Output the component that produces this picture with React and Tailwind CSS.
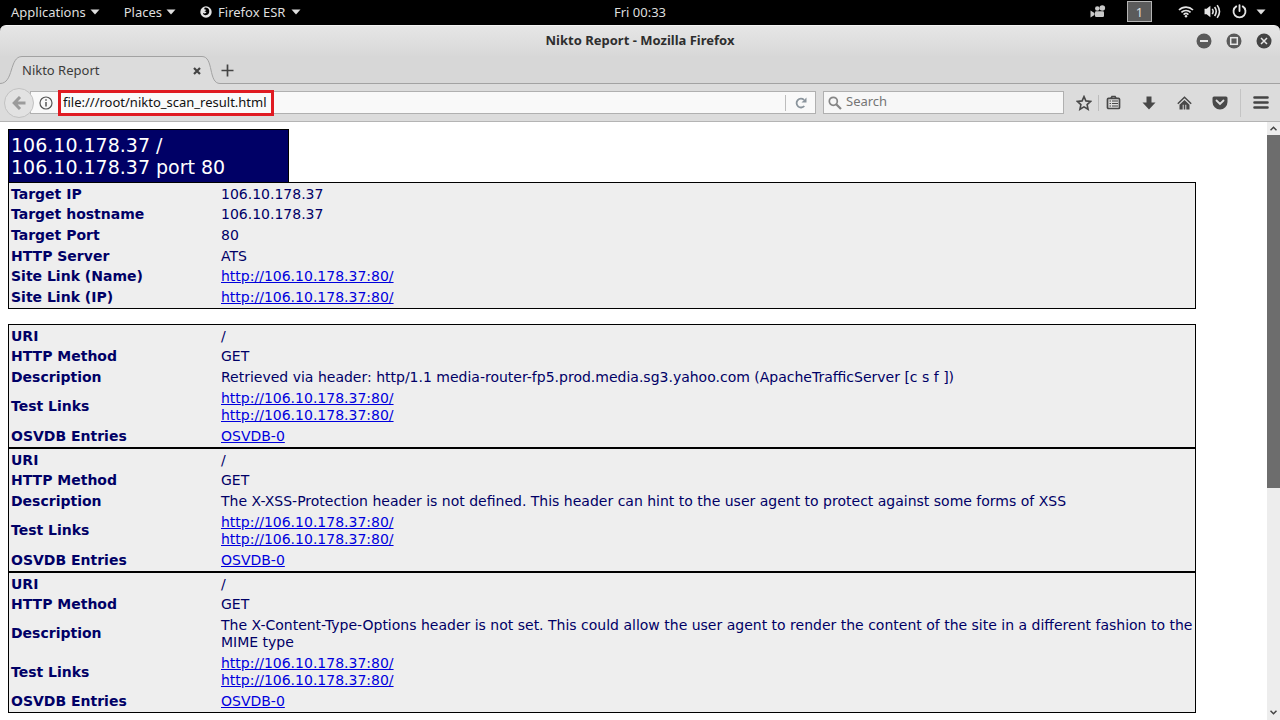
import React from "react";

const siteLink = "http://106.10.178.37:80/";

const summary = [
  ["Target IP", "106.10.178.37"],
  ["Target hostname", "106.10.178.37"],
  ["Target Port", "80"],
  ["HTTP Server", "ATS"],
  ["Site Link (Name)", siteLink, true],
  ["Site Link (IP)", siteLink, true],
];

const findings = [
  {
    text: "Retrieved via header: http/1.1 media-router-fp5.prod.media.sg3.yahoo.com (ApacheTrafficServer [c s f ])",
    height: "h-[124px]",
  },
  {
    text: "The X-XSS-Protection header is not defined. This header can hint to the user agent to protect against some forms of XSS",
    height: "h-[124px]",
  },
  {
    text: "The X-Content-Type-Options header is not set. This could allow the user agent to render the content of the site in a different fashion to the MIME type",
    height: "h-[141px]",
  },
];

function Caret() {
  return (
    <svg width="10" height="6" viewBox="0 0 10 6" fill="currentColor" aria-hidden="true">
      <path d="M0.5 0.5h9L5 5.5z" />
    </svg>
  );
}

function TopBar() {
  return (
    <header className="grid h-[25px] shrink-0 grid-cols-[1fr_auto_1fr] items-center bg-black pb-[2px] text-[13px] leading-5 text-[#dedede]">
      <nav className="flex items-center gap-6 pl-[11px]">
        <button className="flex items-center gap-1">Applications <Caret /></button>
        <button className="flex items-center gap-1">Places <Caret /></button>
        <button className="flex items-center gap-[6px]">
          <svg width="12" height="12" viewBox="0 0 12 12" aria-hidden="true">
            <circle cx="6" cy="6" r="5.7" fill="#e4e4e4" />
            <path d="M4.800 1.500C7 1.200 9 2.500 9.200 4.600 9.600 7.500 7.800 9.400 5.600 9.300 3.800 9.200 2.900 8 3 6.800c.8.700 2 .8 2.900.1.700-.5.600-1 0-1.200H4.600C5 4.800 5.600 4.600 6.200 4.300 5.800 3.400 5 3.200 4 3.200z" fill="#000" />
          </svg>
          Firefox ESR <Caret />
        </button>
      </nav>
      <time>Fri 00:33</time>
      <div className="flex items-center justify-end pr-[14px]">
        <button aria-label="Screen recorder" className="mr-[21px]">
          <svg width="16" height="13" viewBox="0 0 16 13" fill="#c9c9c9" aria-hidden="true">
            <circle cx="7.300" cy="3.500" r="2.300" /><circle cx="12.300" cy="3" r="2.800" />
            <rect x="5" y="6.300" width="9" height="5.700" rx="1.200" />
            <path d="M0.500 5.500L4.500 8v2L0.500 12.500z" />
          </svg>
        </button>
        <button aria-label="Workspace 1" className="mr-[26px] h-[21px] w-[25px] border border-[#b4b4b4] bg-[#5b5b5b] leading-[18px]">1</button>
        <button aria-label="Wireless network" className="mr-[10px]">
          <svg width="16" height="13" viewBox="0 0 16 13" fill="none" stroke="#e4e4e4" strokeWidth="1.700" aria-hidden="true">
            <path d="M1 5a10 10 0 0 1 14 0M3.400 7.400a6.500 6.500 0 0 1 9.200 0M5.600 9.600a3.500 3.500 0 0 1 4.800 0" />
            <circle cx="8" cy="11.200" r="1.200" fill="#e4e4e4" stroke="none" />
          </svg>
        </button>
        <button aria-label="Volume" className="mr-[11px]">
          <svg width="17" height="15" viewBox="0 0 16 14" fill="none" stroke="#e4e4e4" strokeWidth="1.500" aria-hidden="true">
            <path d="M0.500 4.500h2L6 1.500v11L2.500 9.500h-2z" fill="#e4e4e4" stroke="none" />
            <path d="M7.800 4.500q1.600 2.500 0 5M10 2.800q3 4.200 0 8.400M12.400 1q4.400 6 0 12" />
          </svg>
        </button>
        <button aria-label="Power" className="mr-[9px]">
          <svg width="15" height="15" viewBox="0 0 14 14" fill="none" stroke="#e4e4e4" strokeWidth="1.700" strokeLinecap="round" aria-hidden="true">
            <path d="M4 2.200a5.600 5.600 0 1 0 6 0M7 1v5.500" />
          </svg>
        </button>
        <button aria-label="System menu"><Caret /></button>
      </div>
    </header>
  );
}

function WindowButton({ label, tone, children }) {
  return (
    <button aria-label={label}>
      <svg width="16" height="16" viewBox="0 0 16 16" fill="none" stroke="#e6e6e6" strokeWidth="1.500" aria-hidden="true">
        <circle cx="8" cy="8" r="7.500" fill={tone} stroke="none" />
        {children}
      </svg>
    </button>
  );
}

function TitleBar() {
  return (
    <div className="grid h-[31px] shrink-0 grid-cols-[1fr_auto_1fr] items-center rounded-t-md border-t border-[#f4f4f4] bg-linear-to-b from-[#e6e6e6] to-[#d8d8d8] pb-px">
      <h1 className="col-start-2 text-[13px] font-bold text-[#2e2e2e]">Nikto Report - Mozilla Firefox</h1>
      <div className="flex items-center justify-end gap-[14px] pr-2">
        <WindowButton label="Minimize" tone="#5a5a5a"><path d="M4 8h8" strokeWidth="2" /></WindowButton>
        <WindowButton label="Maximize" tone="#5a5a5a"><rect x="4.700" y="4.700" width="6.600" height="6.600" /></WindowButton>
        <WindowButton label="Close" tone="#444"><path d="M5 5l6 6M11 5l-6 6" /></WindowButton>
      </div>
    </div>
  );
}

function TabStrip() {
  return (
    <div className="flex h-7 shrink-0 bg-[#d7d7d7]">
      <svg width="22" height="28" viewBox="0 0 22 28" aria-hidden="true">
        <path d="M0 27.500C14 27.500 9 0.500 22 0.500V28H0z" fill="#dcdcdc" />
        <path d="M0 27.500C14 27.500 9 0.500 22 0.500" fill="none" stroke="#a2a2a2" />
      </svg>
      <div className="flex w-[180px] items-center justify-between border-t border-[#a2a2a2] bg-[#dcdcdc] text-[13px] text-[#3b3b3b]">
        <span>Nikto Report</span>
        <button aria-label="Close tab" className="mr-px">
          <svg width="8" height="8" viewBox="0 0 8 8" stroke="#444" strokeWidth="2.200" aria-hidden="true"><path d="M1 1l6 6M7 1L1 7" /></svg>
        </button>
      </div>
      <svg width="18" height="28" viewBox="0 0 18 28" aria-hidden="true">
        <path d="M0 0.500C12 0.500 6 27.500 18 27.500V28H0z" fill="#dcdcdc" />
        <path d="M0 0.500C12 0.500 6 27.500 18 27.500" fill="none" stroke="#a2a2a2" />
      </svg>
      <div className="flex flex-1 items-center border-b border-[#a2a2a2]">
        <button aria-label="New tab" className="ml-px pt-px">
          <svg width="13" height="13" viewBox="0 0 13 13" stroke="#444" strokeWidth="1.700" aria-hidden="true"><path d="M6.500 0.500v12M0.500 6.500h12" /></svg>
        </button>
      </div>
    </div>
  );
}

function Toolbar() {
  return (
    <div className="flex h-[38px] shrink-0 items-center border-b border-[#b4b4b4] bg-[#dcdcdc] text-[13px]">
      <button aria-label="Back" className="z-10 ml-1 flex size-[30px] shrink-0 items-center justify-center rounded-full border border-[#c2c2c2] bg-[#e2e2e2]">
        <svg width="14" height="14" viewBox="0 0 14 14" fill="none" stroke="#9b9b9b" strokeWidth="3" aria-hidden="true"><path d="M13.500 7H3M8 1L2.200 7 8 13" /></svg>
      </button>
      <div className="-ml-1 flex h-[23px] min-w-0 flex-1 items-center border border-[#b0b0b0] bg-[#f9f9f9] pl-2">
        <button aria-label="Site information">
          <svg width="14" height="14" viewBox="0 0 14 14" fill="none" stroke="#555" aria-hidden="true">
            <circle cx="7" cy="7" r="6" strokeWidth="1.200" /><path d="M7 6v4.500M7 3.200v1.600" strokeWidth="1.500" />
          </svg>
        </button>
        <input aria-label="Address" defaultValue="file:///root/nikto_scan_result.html" className="z-10 ml-[5px] h-[26px] w-[216px] shrink-0 border-[3px] border-[#e01b22] bg-[#fafafa] px-[2px] pb-[2px] text-[#111] outline-none" />
        <div className="flex-1" />
        <button aria-label="Reload" className="flex h-4 w-[30px] items-center justify-center border-l border-[#bdbdbd]">
          <svg width="12" height="12" viewBox="0 0 12 12" fill="none" stroke="#8a949c" strokeWidth="1.800" aria-hidden="true">
            <path d="M9.300 9A4.400 4.400 0 1 1 9 2.900" /><path d="M11.500 0.500v5h-5z" fill="#8a949c" stroke="none" />
          </svg>
        </button>
      </div>
      <label className="ml-[7px] flex h-[23px] w-[241px] shrink-0 items-center border border-[#b0b0b0] bg-[#f7f7f7] pl-1">
        <svg width="14" height="14" viewBox="0 0 14 14" fill="none" stroke="#868686" strokeWidth="1.700" aria-hidden="true"><circle cx="5.300" cy="5.300" r="4" /><path d="M8.200 8.200L13 13" strokeWidth="2.200" /></svg>
        <input aria-label="Search" placeholder="Search" className="ml-1 min-w-0 flex-1 bg-transparent pb-px outline-none placeholder:text-[#757575]" />
      </label>
      <div className="flex h-[28px] shrink-0 items-center pl-3 pr-[11px]">
        <button aria-label="Bookmark this page">
          <svg width="16" height="16" viewBox="0 0 16 16" fill="none" stroke="#484848" strokeWidth="1.600" strokeLinejoin="miter" aria-hidden="true"><path d="M8 1.600l1.900 4.300 4.700.5-3.500 3.200 1 4.700L8 11.900l-4.100 2.400 1-4.700L1.400 6.400l4.700-.5z" /></svg>
        </button>
        <div className="ml-[6px] h-4 w-px bg-[#bcbcbc]" />
        <button aria-label="Bookmarks list" className="ml-[7px]">
          <svg width="15" height="15" viewBox="0 0 15 15" fill="none" stroke="#484848" strokeWidth="1.700" aria-hidden="true">
            <rect x="1.500" y="3.300" width="12" height="10.200" rx="1" /><path d="M5 3.300L6 1.500h3l1 1.800" /><path d="M3.500 6h1.500M6 6h6M3.500 8.500h1.500M6 8.500h6M3.500 11h1.500M6 11h6" strokeWidth="1.200" />
          </svg>
        </button>
        <button aria-label="Downloads" className="ml-[21px]">
          <svg width="14" height="14" viewBox="0 0 14 14" fill="#484848" aria-hidden="true"><path d="M4.500 0.500h5v6h4L7 13.500 0.500 6.500h4z" /></svg>
        </button>
        <button aria-label="Home" className="ml-[21px]">
          <svg width="15" height="14" viewBox="0 0 15 14" aria-hidden="true"><path d="M0.800 7.800L7.500 1.300l6.700 6.500" fill="none" stroke="#484848" strokeWidth="1.500" /><path d="M7.500 4L12.500 8.800v4.700H9.300V8.800H8.300v4.700H6.700V8.800H5.700v4.700H2.500V8.800z" fill="#484848" /></svg>
        </button>
        <button aria-label="Pocket" className="ml-[20px]">
          <svg width="16" height="14" viewBox="0 0 16 14" aria-hidden="true"><path d="M2 0.500h12a1.500 1.500 0 0 1 1.500 1.500v4a7.500 7.500 0 0 1-15 0V2A1.500 1.500 0 0 1 2 0.500z" fill="#484848" /><path d="M4.500 4.500L8 8l3.500-3.500" fill="none" stroke="#dcdcdc" strokeWidth="1.800" strokeLinecap="round" /></svg>
        </button>
        <div className="ml-3 h-7 w-px bg-[#c4c4c4]" />
        <button aria-label="Open menu" className="ml-3">
          <svg width="16" height="13" viewBox="0 0 16 13" stroke="#444" strokeWidth="2.600" strokeLinecap="round" aria-hidden="true"><path d="M1.500 1.500h13M1.500 6.500h13M1.500 11.500h13" /></svg>
        </button>
      </div>
    </div>
  );
}

function ReportLink({ children }) {
  return <a href={siteLink} className="text-[#0000dd] underline">{children}</a>;
}

function ReportTable({ className, children }) {
  return (
    <table className={`w-[95%] border-separate border-spacing-0 border border-black bg-[#eee] pt-px ${className}`}>
      <tbody>{children}</tbody>
    </table>
  );
}

function Row({ name, children }) {
  return (
    <tr>
      <th scope="row" className="w-[210px] py-px pl-[2px] text-left align-middle font-bold">{name}</th>
      <td className="py-px pl-[2px] align-middle">{children}</td>
    </tr>
  );
}

function Report() {
  return (
    <main className="min-w-0 flex-1 overflow-hidden bg-white px-2 pt-[7px] font-['DejaVu_Sans',sans-serif] text-[14px] leading-[17px] text-[#000066]">
      <h2 className="w-[281px] border border-b-0 border-black bg-[#000066] py-1 pl-[2px] pr-12 text-[19px] leading-[22px] text-white">106.10.178.37 / 106.10.178.37 port 80</h2>
      <ReportTable className="mb-[15px] h-[127px]">
        {summary.map(([name, value, link]) => (
          <Row key={name} name={name}>{link ? <ReportLink>{value}</ReportLink> : value}</Row>
        ))}
      </ReportTable>
      {findings.map(({ text, height }) => (
        <ReportTable key={text} className={height}>
          <Row name="URI">/</Row>
          <Row name="HTTP Method">GET</Row>
          <Row name="Description">{text}</Row>
          <Row name="Test Links"><ReportLink>{siteLink}</ReportLink><br /><ReportLink>{siteLink}</ReportLink></Row>
          <Row name="OSVDB Entries"><ReportLink>OSVDB-0</ReportLink></Row>
        </ReportTable>
      ))}
    </main>
  );
}

function ScrollBar() {
  return (
    <div className="flex w-[13px] shrink-0 flex-col bg-[#ededed]">
      <button aria-label="Scroll up" className="flex h-[13px] items-center justify-center">
        <svg width="7" height="5" viewBox="0 0 7 5" fill="none" stroke="#444" strokeWidth="1.500" aria-hidden="true"><path d="M0.500 4.200l3-3 3 3" /></svg>
      </button>
      <div className="flex-1"><div className="h-[62%] bg-[#6d6d6d]" /></div>
      <button aria-label="Scroll down" className="flex h-[15px] items-center justify-center">
        <svg width="7" height="5" viewBox="0 0 7 5" fill="none" stroke="#444" strokeWidth="1.500" aria-hidden="true"><path d="M0.500 0.800l3 3 3-3" /></svg>
      </button>
    </div>
  );
}

export default function App() {
  return (
    <div className="flex h-screen flex-col overflow-hidden bg-black font-['Noto_Sans',sans-serif]">
      <TopBar />
      <TitleBar />
      <TabStrip />
      <Toolbar />
      <div className="flex min-h-0 flex-1">
        <Report />
        <ScrollBar />
      </div>
    </div>
  );
}
